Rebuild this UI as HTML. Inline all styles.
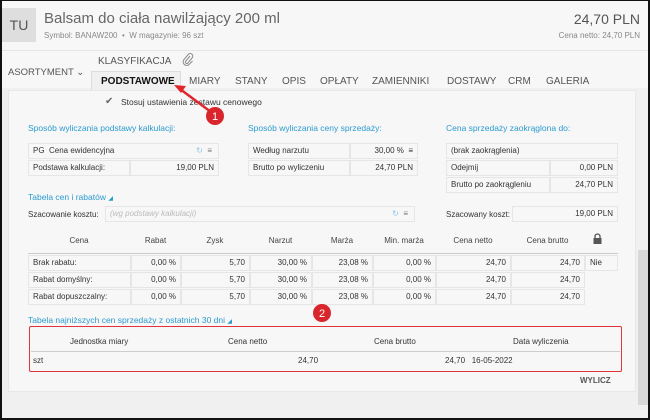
<!DOCTYPE html>
<html><head><meta charset="utf-8"><style>
*{margin:0;padding:0;box-sizing:border-box}
body{width:650px;height:420px;overflow:hidden;font-family:"Liberation Sans",sans-serif;font-size:8.5px;color:#333;background:#f0f0f0;position:relative}
.a{position:absolute;white-space:nowrap}
.frame{position:absolute;left:0;top:0;width:650px;height:420px;border:2px solid #111;border-top:1px solid #111;pointer-events:none}
.lbl{color:#2b9bd0;font-size:8.5px}
.cell{position:absolute;background:#f7f7f7;border:1px solid #e6e6e6;height:16px;line-height:14px;padding:0 4px;font-size:8px}
.r{text-align:right}
.tab{position:absolute;top:76px;font-size:10px;color:#555}
.th{position:absolute;top:236px;font-size:8px;color:#444;text-align:center}
</style></head><body>
<div class="a" style="left:0;top:0;width:650px;height:88px;background:#f7f7f7"></div>
<div class="a" style="left:2px;top:8px;width:34px;height:34px;background:#dedede;color:#555;font-size:14px;text-align:center;line-height:34px">TU</div>
<div class="a" style="left:44px;top:10px;font-size:15px;color:#666">Balsam do ciała nawilżający 200 ml</div>
<div class="a" style="left:44px;top:31px;font-size:8px;color:#888">Symbol: BANAW200 &nbsp;•&nbsp; W magazynie: 96 szt</div>
<div class="a" style="right:10px;top:11px;font-size:14px;color:#555">24,70 PLN</div>
<div class="a" style="right:10px;top:31px;font-size:8px;color:#888">Cena netto: 24,70 PLN</div>
<div class="a" style="left:0;top:50px;width:650px;height:1px;background:#e6e6e6"></div>
<div class="a" style="left:98px;top:56px;font-size:10px;color:#555">KLASYFIKACJA</div>
<svg class="a" style="left:182px;top:53px" width="12" height="14" viewBox="0 0 12 14"><path d="M8 3 L3.5 8.5 a1.5 1.5 0 0 0 2 2 L10 5 a2.6 2.6 0 0 0 -3.7 -3.7 L1.8 6.8 a3.6 3.6 0 0 0 5 5 L10.5 8" fill="none" stroke="#888" stroke-width="1"/></svg>
<div class="a" style="left:8px;top:67px;font-size:9.5px;color:#555">ASORTYMENT ⌄</div>
<div class="a" style="left:91px;top:71px;width:90px;height:20px;background:#f0f0f0;border:1px solid #ddd;border-bottom:none"></div>
<div class="tab" style="left:101px;color:#111;font-weight:bold">PODSTAWOWE</div>
<div class="tab" style="left:189px">MIARY</div>
<div class="tab" style="left:235px">STANY</div>
<div class="tab" style="left:282px">OPIS</div>
<div class="tab" style="left:320px">OPŁATY</div>
<div class="tab" style="left:372px">ZAMIENNIKI</div>
<div class="tab" style="left:447px">DOSTAWY</div>
<div class="tab" style="left:508px">CRM</div>
<div class="tab" style="left:546px">GALERIA</div>
<div class="a" style="left:8px;top:90px;width:628px;height:302px;background:#f7f7f7;border:1px solid #e8e8e8"></div>
<div class="a" style="left:638px;top:90px;width:10px;height:330px;background:#f0f0f0"></div>
<div class="a" style="left:638px;top:250px;width:10px;height:155px;background:#d8d8d8"></div>
<div class="a" style="left:105px;top:96px;font-size:10px;color:#666">✔</div>
<div class="a" style="left:121px;top:97px;font-size:8.5px">Stosuj ustawienia zestawu cenowego</div>

<div class="a lbl" style="left:28px;top:123px">Sposób wyliczania podstawy kalkulacji:</div>
<div class="a lbl" style="left:248px;top:123px">Sposób wyliczania ceny sprzedaży:</div>
<div class="a lbl" style="left:446px;top:123px">Cena sprzedaży zaokrąglona do:</div>
<div class="cell" style="left:28px;top:143px;width:191px">PG&nbsp; Cena ewidencyjna<span style="position:absolute;right:6px;color:#777">&nbsp;<span style="color:#8cc4e8">↻</span>&nbsp; ≡</span></div>
<div class="cell" style="left:28px;top:160px;width:102px">Podstawa kalkulacji:</div>
<div class="cell r" style="left:130px;top:160px;width:89px">19,00 PLN</div>
<div class="cell" style="left:248px;top:143px;width:102px">Według narzutu</div>
<div class="cell r" style="left:350px;top:143px;width:68px">30,00 % &nbsp;≡</div>
<div class="cell" style="left:248px;top:160px;width:102px">Brutto po wyliczeniu</div>
<div class="cell r" style="left:350px;top:160px;width:68px">24,70 PLN</div>
<div class="cell" style="left:446px;top:143px;width:172px">(brak zaokrąglenia)</div>
<div class="cell" style="left:446px;top:160px;width:104px">Odejmij</div>
<div class="cell r" style="left:550px;top:160px;width:68px">0,00 PLN</div>
<div class="cell" style="left:446px;top:177px;width:104px">Brutto po zaokrągleniu</div>
<div class="cell r" style="left:550px;top:177px;width:68px">24,70 PLN</div>

<div class="a lbl" style="left:28px;top:192px">Tabela cen i rabatów <span style="font-size:6px">◢</span></div>
<div class="a" style="left:28px;top:210px;font-size:8px">Szacowanie kosztu:</div>
<div class="cell" style="left:105px;top:206px;width:310px;color:#bbb;font-style:italic">(wg podstawy kalkulacji)<span style="position:absolute;right:6px;font-style:normal;color:#777"><span style="color:#8cc4e8">↻</span>&nbsp; ≡</span></div>
<div class="a" style="left:446px;top:210px;font-size:8px">Szacowany koszt:</div>
<div class="cell r" style="left:512px;top:206px;width:106px">19,00 PLN</div>

<div class="th" style="left:28px;width:102px">Cena</div>
<div class="th" style="left:131px;width:49px">Rabat</div>
<div class="th" style="left:181px;width:68px">Zysk</div>
<div class="th" style="left:250px;width:61px">Narzut</div>
<div class="th" style="left:312px;width:60px">Marża</div>
<div class="th" style="left:373px;width:62px">Min. marża</div>
<div class="th" style="left:436px;width:74px">Cena netto</div>
<div class="th" style="left:511px;width:73px">Cena brutto</div>
<svg class="a" style="left:593px;top:233px" width="9" height="11" viewBox="0 0 9 11"><path d="M2 5V3.5a2.5 2.5 0 0 1 5 0V5" fill="none" stroke="#555" stroke-width="1.3"/><rect x="0.5" y="5" width="8" height="6" fill="#555"/></svg>
<div class="a" style="left:28px;top:253px;width:590px;height:1px;background:#ccc"></div>

<div class="cell" style="left:28px;top:255px;width:103px">Brak rabatu:</div>
<div class="cell r" style="left:131px;top:255px;width:50px">0,00 %</div>
<div class="cell r" style="left:181px;top:255px;width:69px">5,70</div>
<div class="cell r" style="left:250px;top:255px;width:62px">30,00 %</div>
<div class="cell r" style="left:312px;top:255px;width:61px">23,08 %</div>
<div class="cell r" style="left:373px;top:255px;width:63px">0,00 %</div>
<div class="cell r" style="left:436px;top:255px;width:75px">24,70</div>
<div class="cell r" style="left:511px;top:255px;width:74px">24,70</div>
<div class="cell" style="left:585px;top:255px;width:33px">Nie</div>

<div class="cell" style="left:28px;top:272px;width:103px">Rabat domyślny:</div>
<div class="cell r" style="left:131px;top:272px;width:50px">0,00 %</div>
<div class="cell r" style="left:181px;top:272px;width:69px">5,70</div>
<div class="cell r" style="left:250px;top:272px;width:62px">30,00 %</div>
<div class="cell r" style="left:312px;top:272px;width:61px">23,08 %</div>
<div class="cell r" style="left:373px;top:272px;width:63px">0,00 %</div>
<div class="cell r" style="left:436px;top:272px;width:75px">24,70</div>
<div class="cell r" style="left:511px;top:272px;width:74px">24,70</div>

<div class="cell" style="left:28px;top:289px;width:103px">Rabat dopuszczalny:</div>
<div class="cell r" style="left:131px;top:289px;width:50px">0,00 %</div>
<div class="cell r" style="left:181px;top:289px;width:69px">5,70</div>
<div class="cell r" style="left:250px;top:289px;width:62px">30,00 %</div>
<div class="cell r" style="left:312px;top:289px;width:61px">23,08 %</div>
<div class="cell r" style="left:373px;top:289px;width:63px">0,00 %</div>
<div class="cell r" style="left:436px;top:289px;width:75px">24,70</div>
<div class="cell r" style="left:511px;top:289px;width:74px">24,70</div>

<div class="a lbl" style="left:28px;top:315px">Tabela najniższych cen sprzedaży z ostatnich 30 dni <span style="font-size:6px">◢</span></div>
<div class="a" style="left:29px;top:326px;width:593px;height:46px;border:1.5px solid #e0333a;border-radius:2px"></div>
<div class="a" style="left:70px;top:337px;font-size:8px">Jednostka miary</div>
<div class="a" style="left:228px;top:337px;font-size:8px">Cena netto</div>
<div class="a" style="left:374px;top:337px;font-size:8px">Cena brutto</div>
<div class="a" style="left:513px;top:337px;font-size:8px">Data wyliczenia</div>
<div class="a" style="left:31px;top:351px;width:589px;height:1px;background:#ccc"></div>
<div class="a" style="left:33px;top:356px;font-size:8px">szt</div>
<div class="a" style="left:298px;top:356px;font-size:8px">24,70</div>
<div class="a" style="left:445px;top:356px;font-size:8px">24,70&nbsp;&nbsp; 16-05-2022</div>
<div class="a" style="left:580px;top:376px;font-size:8px;font-weight:bold;color:#555">WYLICZ</div>

<svg class="a" style="left:0;top:0" width="650" height="420">
<path d="M211 112 L180 89" stroke="#e0262c" stroke-width="2.5"/>
<path d="M174 85 L186 86 L181 93 Z" fill="#e0262c"/>
<circle cx="215" cy="116" r="9" fill="#d9262c"/>
<text x="215" y="120" font-size="11" fill="#fff" text-anchor="middle" font-family="Liberation Sans">1</text>
<circle cx="322" cy="313" r="9" fill="#d9262c"/>
<text x="322" y="317" font-size="11" fill="#fff" text-anchor="middle" font-family="Liberation Sans">2</text>
</svg>
<div class="frame"></div>
</body></html>
